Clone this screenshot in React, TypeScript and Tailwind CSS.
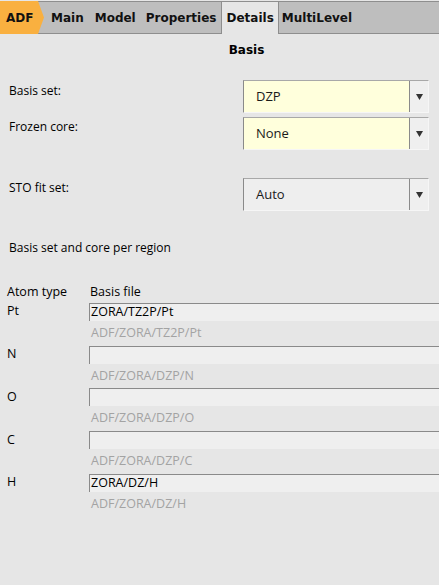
import React from "react";

function Combo({ value, yellow }: { value: string; yellow?: boolean }) {
  return (
    <div
      className={`flex h-[33px] w-[186px] border-l border-t border-l-[#8a8a8a] border-t-[#a8a8a8] border-r border-b border-r-[#f6f6f6] border-b-[#f6f6f6] ${
        yellow ? "bg-[#ffffdc]" : "bg-[#eeeeee]"
      }`}
    >
      <div className="flex-1 flex items-center pl-[12px] text-[13px] text-[#1a1a1a]">{value}</div>
      <div className="w-[19px] flex items-center justify-center border-l border-l-[#8a8a8a] bg-[#efefef]">
        <svg width="7" height="6" viewBox="0 0 7 6">
          <polygon points="0,0 7,0 3.5,6" fill="#333" />
        </svg>
      </div>
    </div>
  );
}

function AtomRow({ atom, value, hint }: { atom: string; value: string; hint: string }) {
  return (
    <div className="flex flex-col">
      <div className="flex items-center h-[18px]">
        <div className="w-[89px] pl-[7px] text-[12.5px] text-black">{atom}</div>
        <div className="flex-1 h-[18px] bg-[#efefef] border-l border-t border-l-[#8a8a8a] border-t-[#8a8a8a] flex items-center pl-[1px] text-[12.5px] text-black">
          {value}
        </div>
      </div>
      <div className="h-[24.75px] pl-[91px] flex items-center text-[12.5px] text-[#a3a3a3]">{hint}</div>
    </div>
  );
}

export default function App() {
  return (
    <div
      className="w-[439px] h-[585px] bg-[#e6e6e6] overflow-hidden text-black"
      style={{ fontFamily: '"Open Sans", "Noto Sans", sans-serif' }}
    >
      {/* Tab bar */}
      <div className="pt-[1px] h-[34px]">
        <div
          className="flex h-[33px] bg-[#bebebe] border-t border-t-[#8e8e8e] border-b border-b-[#8e8e8e] text-[12px] font-bold text-[#111]"
          style={{ fontFamily: '"DejaVu Sans", sans-serif' }}
        >
          <div className="w-[44px] -mt-[1px] h-[33px] bg-[#f9b040] flex items-center pl-[6px] [clip-path:polygon(0_0,38px_0,44px_50%,38px_100%,0_100%)]">
            ADF
          </div>
          <div className="flex items-center pl-[7px] pr-[11px]">Main</div>
          <div className="flex items-center pr-[10px]">Model</div>
          <div className="flex items-center pr-[5px]">Properties</div>
          <div className="flex items-center px-[4px] bg-[#e6e6e6] border-l border-r border-t border-[#8e8e8e] -mt-[1px] -mb-[1px] h-[33px]">
            Details
          </div>
          <div className="flex items-center pl-[3px]">MultiLevel</div>
        </div>
      </div>

      {/* Basis header */}
      <div className="h-[31px] flex items-center justify-center pl-[54px] text-[12px] font-bold" style={{ fontFamily: '"DejaVu Sans", sans-serif' }}>
        Basis
      </div>

      {/* Form */}
      <div className="mt-[15px] flex flex-col">
        <div className="flex">
          <div className="w-[243px] pl-[9px] pt-[2px] text-[12px]">Basis set:</div>
          <Combo value="DZP" yellow />
        </div>
        <div className="flex mt-[4px]">
          <div className="w-[243px] pl-[9px] pt-[1px] text-[12px]">Frozen core:</div>
          <Combo value="None" yellow />
        </div>
        <div className="flex mt-[28px]">
          <div className="w-[243px] pl-[9px] pt-[1px] text-[12px]">STO fit set:</div>
          <Combo value="Auto" />
        </div>
      </div>

      <div className="mt-[28px] pl-[9px] text-[12px]">Basis set and core per region</div>

      <div className="mt-[26px] flex text-[12.5px]">
        <div className="w-[89px] pl-[7px]">Atom type</div>
        <div className="pl-[1px]">Basis file</div>
      </div>

      <div className="mt-[1px] flex flex-col">
        <AtomRow atom="Pt" value="ZORA/TZ2P/Pt" hint="ADF/ZORA/TZ2P/Pt" />
        <AtomRow atom="N" value="" hint="ADF/ZORA/DZP/N" />
        <AtomRow atom="O" value="" hint="ADF/ZORA/DZP/O" />
        <AtomRow atom="C" value="" hint="ADF/ZORA/DZP/C" />
        <AtomRow atom="H" value="ZORA/DZ/H" hint="ADF/ZORA/DZ/H" />
      </div>
    </div>
  );
}
